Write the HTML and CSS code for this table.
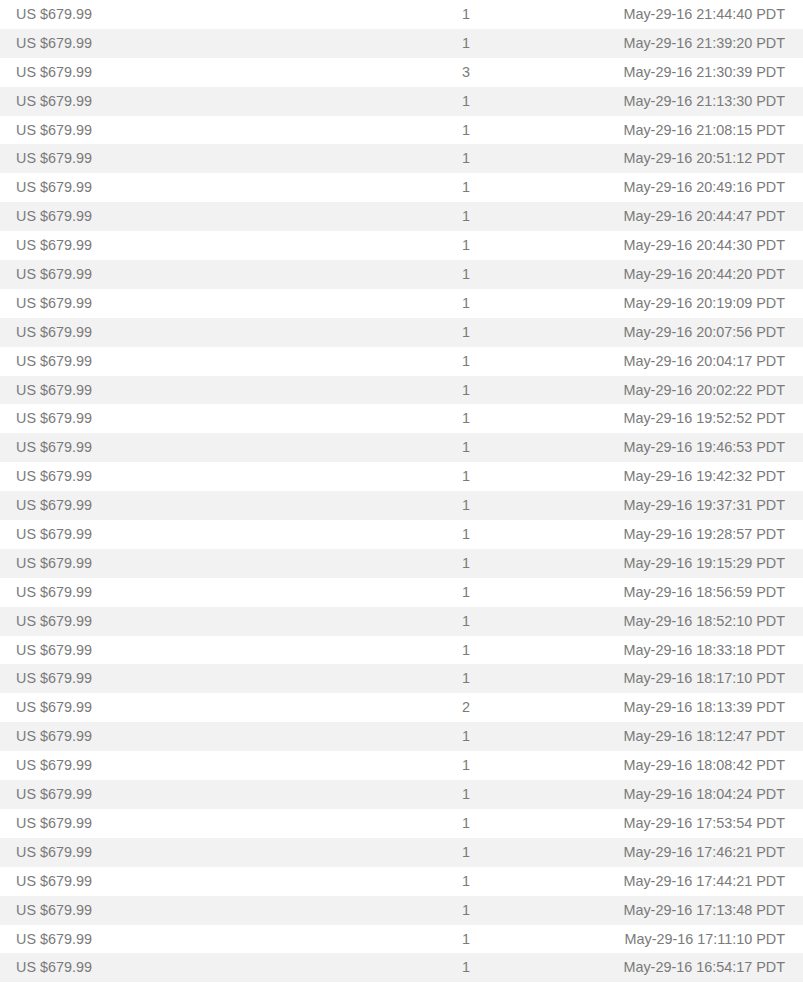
FILE: index.html
```html
<!DOCTYPE html>
<html>
<head>
<meta charset="utf-8">
<link rel="stylesheet" href="styles.css">
</head>
<body>
<div class="table">
<div class="row"><span class="price">US $679.99</span><span class="qty">1</span><span class="date">May-29-16 21:44:40 PDT</span></div>
<div class="row"><span class="price">US $679.99</span><span class="qty">1</span><span class="date">May-29-16 21:39:20 PDT</span></div>
<div class="row"><span class="price">US $679.99</span><span class="qty">3</span><span class="date">May-29-16 21:30:39 PDT</span></div>
<div class="row"><span class="price">US $679.99</span><span class="qty">1</span><span class="date">May-29-16 21:13:30 PDT</span></div>
<div class="row"><span class="price">US $679.99</span><span class="qty">1</span><span class="date">May-29-16 21:08:15 PDT</span></div>
<div class="row"><span class="price">US $679.99</span><span class="qty">1</span><span class="date">May-29-16 20:51:12 PDT</span></div>
<div class="row"><span class="price">US $679.99</span><span class="qty">1</span><span class="date">May-29-16 20:49:16 PDT</span></div>
<div class="row"><span class="price">US $679.99</span><span class="qty">1</span><span class="date">May-29-16 20:44:47 PDT</span></div>
<div class="row"><span class="price">US $679.99</span><span class="qty">1</span><span class="date">May-29-16 20:44:30 PDT</span></div>
<div class="row"><span class="price">US $679.99</span><span class="qty">1</span><span class="date">May-29-16 20:44:20 PDT</span></div>
<div class="row"><span class="price">US $679.99</span><span class="qty">1</span><span class="date">May-29-16 20:19:09 PDT</span></div>
<div class="row"><span class="price">US $679.99</span><span class="qty">1</span><span class="date">May-29-16 20:07:56 PDT</span></div>
<div class="row"><span class="price">US $679.99</span><span class="qty">1</span><span class="date">May-29-16 20:04:17 PDT</span></div>
<div class="row"><span class="price">US $679.99</span><span class="qty">1</span><span class="date">May-29-16 20:02:22 PDT</span></div>
<div class="row"><span class="price">US $679.99</span><span class="qty">1</span><span class="date">May-29-16 19:52:52 PDT</span></div>
<div class="row"><span class="price">US $679.99</span><span class="qty">1</span><span class="date">May-29-16 19:46:53 PDT</span></div>
<div class="row"><span class="price">US $679.99</span><span class="qty">1</span><span class="date">May-29-16 19:42:32 PDT</span></div>
<div class="row"><span class="price">US $679.99</span><span class="qty">1</span><span class="date">May-29-16 19:37:31 PDT</span></div>
<div class="row"><span class="price">US $679.99</span><span class="qty">1</span><span class="date">May-29-16 19:28:57 PDT</span></div>
<div class="row"><span class="price">US $679.99</span><span class="qty">1</span><span class="date">May-29-16 19:15:29 PDT</span></div>
<div class="row"><span class="price">US $679.99</span><span class="qty">1</span><span class="date">May-29-16 18:56:59 PDT</span></div>
<div class="row"><span class="price">US $679.99</span><span class="qty">1</span><span class="date">May-29-16 18:52:10 PDT</span></div>
<div class="row"><span class="price">US $679.99</span><span class="qty">1</span><span class="date">May-29-16 18:33:18 PDT</span></div>
<div class="row"><span class="price">US $679.99</span><span class="qty">1</span><span class="date">May-29-16 18:17:10 PDT</span></div>
<div class="row"><span class="price">US $679.99</span><span class="qty">2</span><span class="date">May-29-16 18:13:39 PDT</span></div>
<div class="row"><span class="price">US $679.99</span><span class="qty">1</span><span class="date">May-29-16 18:12:47 PDT</span></div>
<div class="row"><span class="price">US $679.99</span><span class="qty">1</span><span class="date">May-29-16 18:08:42 PDT</span></div>
<div class="row"><span class="price">US $679.99</span><span class="qty">1</span><span class="date">May-29-16 18:04:24 PDT</span></div>
<div class="row"><span class="price">US $679.99</span><span class="qty">1</span><span class="date">May-29-16 17:53:54 PDT</span></div>
<div class="row"><span class="price">US $679.99</span><span class="qty">1</span><span class="date">May-29-16 17:46:21 PDT</span></div>
<div class="row"><span class="price">US $679.99</span><span class="qty">1</span><span class="date">May-29-16 17:44:21 PDT</span></div>
<div class="row"><span class="price">US $679.99</span><span class="qty">1</span><span class="date">May-29-16 17:13:48 PDT</span></div>
<div class="row"><span class="price">US $679.99</span><span class="qty">1</span><span class="date">May-29-16 17:11:10 PDT</span></div>
<div class="row"><span class="price">US $679.99</span><span class="qty">1</span><span class="date">May-29-16 16:54:17 PDT</span></div>
</div>
</body>
</html>
```
FILE: styles.css
```css
html, body {
  margin: 0;
  padding: 0;
  background: #ffffff;
}
.table {
  width: 803px;
  font-family: "Liberation Sans", Arial, sans-serif;
  font-size: 14.4px;
  color: #7a7a7a;
}
.row {
  display: grid;
  grid-template-columns: 400px 132px 1fr;
  height: 28.9px;
  line-height: 28.9px;
}
.row:nth-child(even) {
  background: #f2f2f2;
}
.price {
  padding-left: 16px;
}
.qty {
  text-align: center;
}
.date {
  text-align: right;
  padding-right: 18px;
}
```
